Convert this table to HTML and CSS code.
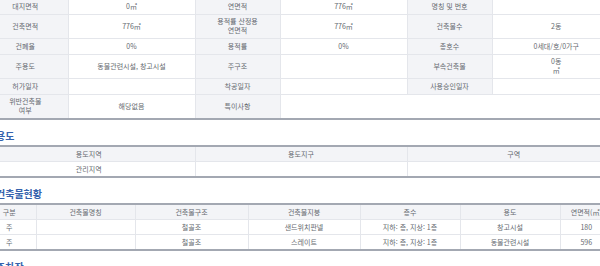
FILE: index.html
```html
<!DOCTYPE html>
<html lang="ko">
<head>
<meta charset="utf-8">
<title>건축물대장</title>
<link rel="stylesheet" href="styles.css">
</head>
<body>
<div class="page">
  <table class="grid info">
    <colgroup>
      <col class="c-lab"><col class="c-val"><col class="c-lab"><col class="c-val"><col class="c-lab"><col class="c-val-last">
    </colgroup>
    <tr>
      <th>대지면적</th><td>0㎡</td><th>연면적</th><td>776㎡</td><th>명칭 및 번호</th><td></td>
    </tr>
    <tr>
      <th>건축면적</th><td>776㎡</td><th>용적률 산정용<br>연면적</th><td>776㎡</td><th>건축물수</th><td>2동</td>
    </tr>
    <tr>
      <th>건폐율</th><td>0%</td><th>용적률</th><td>0%</td><th>총호수</th><td>0세대/호/0가구</td>
    </tr>
    <tr>
      <th>주용도</th><td>동물관련시설, 창고시설</td><th>주구조</th><td></td><th>부속건축물</th><td>0동<br>㎡</td>
    </tr>
    <tr>
      <th>허가일자</th><td></td><th>착공일자</th><td></td><th>사용승인일자</th><td></td>
    </tr>
    <tr>
      <th>위반건축물<br>여부</th><td>해당없음</td><th>특이사항</th><td colspan="3"></td>
    </tr>
  </table>

  <h2 class="sec-title">용도</h2>
  <table class="grid list">
    <colgroup><col class="u1"><col class="u2"><col class="u3"></colgroup>
    <tr class="head"><th>용도지역</th><th>용도지구</th><th>구역</th></tr>
    <tr><td>관리지역</td><td></td><td></td></tr>
  </table>

  <h2 class="sec-title">건축물현황</h2>
  <table class="grid list bldg">
    <colgroup>
      <col class="b1"><col class="b2"><col class="b3"><col class="b4"><col class="b5"><col class="b6"><col class="b7">
    </colgroup>
    <tr class="head"><th>구분</th><th>건축물명칭</th><th>건축물구조</th><th>건축물지붕</th><th>층수</th><th>용도</th><th>연면적(㎡)</th></tr>
    <tr><td>주</td><td></td><td>철골조</td><td>샌드위치판넬</td><td>지하: 층, 지상: 1층</td><td>창고시설</td><td>180</td></tr>
    <tr><td>주</td><td></td><td>철골조</td><td>스레이트</td><td>지하: 층, 지상: 1층</td><td>동물관련시설</td><td>596</td></tr>
  </table>

  <h2 class="sec-title">주차장</h2>
</div>
</body>
</html>
```

FILE: styles.css
```css
html, body {
  margin: 0;
  padding: 0;
  overflow: hidden;
  background: #ffffff;
}

.page {
  width: 637px;
  margin-left: -17px;
  margin-top: -3px;
  font-family: "Noto Sans CJK KR", "Noto Sans", sans-serif;
  color: #666a70;
}

.grid {
  width: 637px;
  table-layout: fixed;
  border-collapse: collapse;
  border-top: 2px solid #a3a8b2;
  border-bottom: 2px solid #a3a8b2;
}

.grid th,
.grid td {
  font-size: 7px;
  line-height: 9px;
  font-weight: normal;
  text-align: center;
  vertical-align: middle;
  border: 1px solid #e4e6eb;
  border-top: none;
  padding: 2.75px 2px;
  white-space: nowrap;
}

.grid tr > :first-child { border-left: none; }
.grid tr > :last-child { border-right: none; }

.info th { background: #f3f4f7; }
.info td { background: #ffffff; }

.c-lab { width: 85px; }
.c-val { width: 127px; }
.c-val-last { width: 128px; }

.list th,
.list td { padding: 2.5px 2px; }
.list .head th { background: #f3f4f7; }

.u1 { width: 212px; }
.u2 { width: 212px; }
.u3 { width: 213px; }

.grid.bldg { width: 629px; }
.b1 { width: 53px; }
.b2 { width: 99px; }
.b3 { width: 113px; }
.b4 { width: 112px; }
.b5 { width: 100px; }
.b6 { width: 100px; }
.b7 { width: 52px; }

.sec-title {
  margin: 0;
  padding: 8.5px 0 2.5px 13px;
  font-size: 10px;
  line-height: 14px;
  font-weight: 700;
  color: #3563ad;
}
```
